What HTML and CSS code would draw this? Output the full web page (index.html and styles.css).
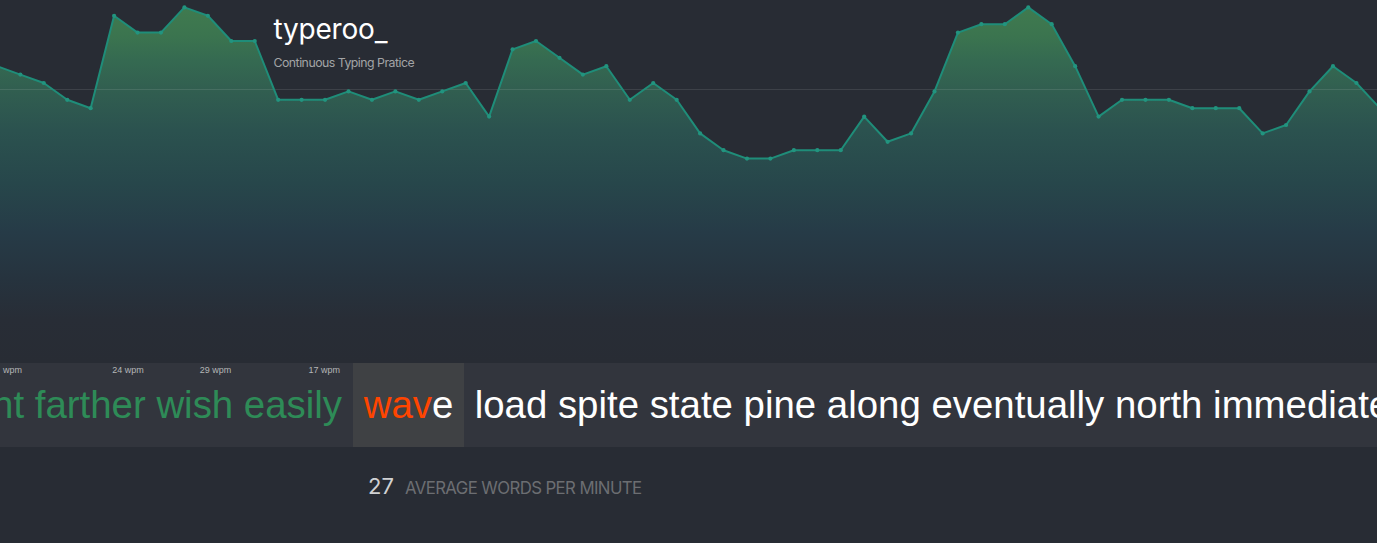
FILE: index.html
```
<!DOCTYPE html>
<html lang="en">
<head>
<meta charset="utf-8">
<title>typeroo_</title>
<link rel="stylesheet" href="styles.css">
</head>
<body>
<main class="app">
  <svg class="chart" viewBox="0 0 1377 363" aria-hidden="true">
    <defs>
      <linearGradient id="fill" gradientUnits="userSpaceOnUse" x1="0" y1="0" x2="0" y2="363">
        <stop offset="0" stop-color="#417c4f"/>
        <stop offset="0.1" stop-color="#3b744f"/>
        <stop offset="0.165" stop-color="#356a51"/>
        <stop offset="0.25" stop-color="#315e50"/>
        <stop offset="0.36" stop-color="#2b524f"/>
        <stop offset="0.5" stop-color="#27474b"/>
        <stop offset="0.64" stop-color="#263b47"/>
        <stop offset="0.77" stop-color="#26333e"/>
        <stop offset="0.88" stop-color="#282d36"/>
        <stop offset="1" stop-color="#282c34"/>
      </linearGradient>
    </defs>
    <path id="area" fill="url(#fill)"/>
    <path class="grid-line" d="M0 89.5H1377"/>
    <path id="line" class="line"/>
    <g id="dots" class="dots"></g>
  </svg>
  <header class="brand">
    <h1 class="title">typeroo<span class="cursor">_</span></h1>
    <p class="tagline">Continuous Typing Pratice</p>
  </header>
  <section class="strip">
    <div class="done">
      <span class="word">nt<small class="wpm">wpm</small></span>
      <span class="word">farther<small class="wpm">24 wpm</small></span>
      <span class="word">wish<small class="wpm">29 wpm</small></span>
      <span class="word">easily<small class="wpm">17 wpm</small></span>
    </div>
    <div class="current"><span class="typed">wav</span>e</div>
    <div class="upcoming">load spite state pine along eventually north immediate</div>
  </section>
  <footer class="stats">
    <span class="average">27</span>
    <span class="label">AVERAGE WORDS PER MINUTE</span>
  </footer>
</main>
<script src="chart.js"></script>
</body>
</html>
```

FILE: styles.css
```
* { box-sizing: border-box; }
body {
  margin: 0;
  background: #282c34;
  color: #fff;
  font-family: Inter, sans-serif;
  overflow: hidden;
}
.app {
  display: grid;
  grid-template-rows: 363px 84px 96px;
  grid-template-columns: 1377px;
  height: 543px;
}
.chart, .brand { grid-row: 1; grid-column: 1; }
.chart { display: block; width: 1377px; height: 363px; }
.grid-line { stroke: #fff; stroke-opacity: .1; }
.line { fill: none; stroke: #1f8d79; stroke-width: 2; stroke-linejoin: round; }
.dots { fill: #22947f; }
.brand { padding: 12px 0 0 273.5px; z-index: 1; }
.title {
  margin: 0;
  font-size: 28px;
  line-height: 34px;
  font-weight: 400;
  letter-spacing: -.2px;
}
.cursor { position: relative; top: 2px; }
.tagline {
  margin: 8px 0 0;
  font-size: 12.3px;
  line-height: 18px;
  letter-spacing: -.5px;
  color: #a3a4a6;
}
.strip {
  display: grid;
  grid-template-columns: 353px 111px 1fr;
  background: #32353d;
  font: 38.4px/84px "Liberation Sans", Arial, sans-serif;
  white-space: nowrap;
  overflow: hidden;
}
.done {
  display: flex;
  justify-content: flex-end;
  gap: 10.67px;
  padding-right: 11px;
  color: #2e8b57;
  overflow: hidden;
}
.word { position: relative; }
.wpm {
  position: absolute;
  top: 1px;
  right: 2px;
  font-size: 9px;
  line-height: 12px;
  color: #b4b5b7;
}
.current { padding-left: 10.67px; background: #3f4144; }
.typed { color: #ff4500; }
.upcoming { padding-left: 10.67px; overflow: hidden; }
.stats {
  display: flex;
  align-items: baseline;
  gap: 11px;
  padding: 24px 0 0 368px;
}
.average { font-size: 22px; line-height: 30px; color: #d0d1d3; }
.label { font-size: 16.8px; letter-spacing: -.6px; color: #6c6e72; }
```

FILE: chart.js
```
// Each level is a drop below the fastest speed, one sample per word.
const levels = [
  7, 8, 9, 11, 12, 1, 3, 3, 0, 1, 4, 4, 11, 11, 11, 10, 11, 10, 11, 10,
  9, 13, 5, 4, 6, 8, 7, 11, 9, 11, 15, 17, 18, 18, 17, 17, 17, 13, 16, 15,
  10, 3, 2, 2, 0, 2, 7, 13, 11, 11, 11, 12, 12, 12, 15, 14, 10, 7, 9, 12
];
const points = levels.map((level, i) => [-3.1 + i * 23.44, 7.4 + level * 8.4]);
const line = "M" + points.map(p => p[0].toFixed(2) + " " + p[1].toFixed(2)).join("L");
document.getElementById("line").setAttribute("d", line);
document.getElementById("area").setAttribute("d", line + "V363H-4Z");
document.getElementById("dots").innerHTML =
  points.map(p => `<circle cx="${p[0]}" cy="${p[1]}" r="2.1"/>`).join("");
```
